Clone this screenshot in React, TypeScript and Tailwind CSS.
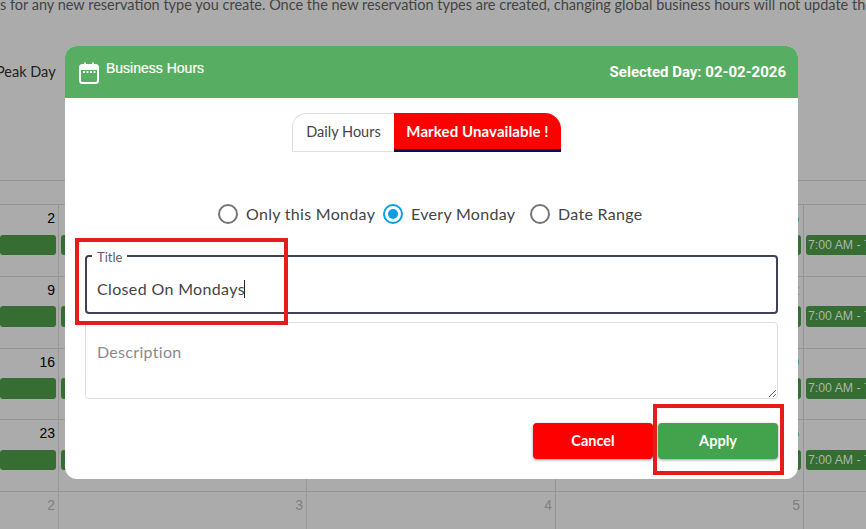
const rows = [
  { h: 'h-[72px]', barClass: 'mt-[7px] h-[20px]', lastClass: 'mt-[30px] h-[20px]', nums: ['2', '3', '4', '5'], ev: true },
  { h: 'h-[72px]', barClass: 'mt-[6px] h-[21px]', lastClass: 'mt-[29px] h-[21px]', nums: ['9', '10', '11', '12'], ev: true },
  { h: 'h-[71px]', barClass: 'mt-[6px] h-[21px]', lastClass: 'mt-[29px] h-[21px]', nums: ['16', '17', '18', '19'], ev: true },
  { h: 'h-[72px]', barClass: 'mt-[7px] h-[20px]', lastClass: 'mt-[30px] h-[20px]', nums: ['23', '24', '25', '26'], ev: true },
  { h: 'h-[38px]', barClass: '', lastClass: '', nums: ['2', '3', '4', '5'], ev: false },
];

type RowProps = { h: string; barClass: string; lastClass: string; nums: string[]; ev: boolean };

function CalendarRow({ h, barClass, lastClass, nums, ev }: RowProps) {
  return (
    <div className={`flex ${h} border-b border-[#959595]`}>
      {nums.map((n, i) => (
        <div
          key={i}
          className={`shrink-0 border-r border-[#959595] pr-[3px] ${i === 0 ? 'w-[59px]' : i === 2 ? 'w-[249px]' : 'w-[248px]'}`}
        >
          <div
            className={`mt-[3px] text-right text-[14px] leading-[20px] ${!ev ? 'text-[#808080]' : i === 3 ? 'mr-px text-[#1a5fa8]' : 'text-black'}`}
          >
            {n}
          </div>
          {ev && (
            <div className={`${barClass} -mr-px rounded-[3px] bg-[#356d33] ${i === 0 ? '' : 'ml-[2px]'}`} />
          )}
        </div>
      ))}
      <div className="min-w-0 flex-1 pl-[2px]">
        {ev && (
          <div className={`${lastClass} overflow-hidden whitespace-nowrap rounded-l-[3px] bg-[#356d33] pl-[2px] text-[12.3px] leading-[20px] text-[#aab8aa]`}>
            7:00 AM - 7:00 PM
          </div>
        )}
      </div>
    </div>
  );
}

function Radio({ label, width, checked }: { label: string; width: string; checked?: boolean }) {
  return (
    <label className={`flex items-center gap-[8px] ${width}`}>
      <span
        className={`flex h-[20px] w-[20px] shrink-0 items-center justify-center rounded-full border-2 ${checked ? 'border-[#0f9be6]' : 'border-[#757575]'}`}
      >
        {checked && <span className="h-[10px] w-[10px] rounded-full bg-[#0f9be6]" />}
      </span>
      <span className="whitespace-nowrap text-[16px] leading-[20px] tracking-[0.3px] text-[#444444]">{label}</span>
    </label>
  );
}

export default function App() {
  return (
    <div className="relative h-[529px] w-[866px] overflow-hidden bg-[#ababab] font-['Lato',sans-serif]">
      {/* page behind the dialog */}
      <p className="h-[60px] whitespace-nowrap text-[14.5px] leading-[10px] text-[#444444]">
        s for any new reservation type you create. Once the new reservation types are created, changing global business hours will not update the
      </p>
      <div className="h-[120px] pt-[2px]">
        <div className="-ml-[4px] text-[14.5px] leading-[20px] text-[#222222]">Peak Day</div>
      </div>
      <div className="border-t border-[#959595] font-['Liberation_Sans',sans-serif]">
        <div className="h-[24px] border-b border-[#959595]" />
        {rows.map((r, i) => (
          <CalendarRow key={i} {...r} />
        ))}
      </div>

      {/* dialog */}
      <div className="absolute left-[65px] top-[46px] flex h-[433px] w-[733px] flex-col overflow-hidden rounded-[12px] bg-white">
        <div className="flex h-[52px] shrink-0 items-center justify-between bg-[#57ad61] pl-[14px] pr-[12px]">
          <div className="flex items-center gap-[7px] text-white">
            <svg width="20" height="22" viewBox="0 0 20 22" fill="none" className="-mb-[2px]">
              <rect x="1" y="3" width="18" height="18" rx="2.5" stroke="white" strokeWidth="2" />
              <rect x="1" y="3" width="18" height="5" fill="white" />
              <rect x="5" y="0.5" width="2" height="4" fill="white" />
              <rect x="13" y="0.5" width="2" height="4" fill="white" />
              <rect x="4" y="9" width="2" height="2" fill="white" />
              <rect x="7.5" y="9" width="2" height="2" fill="white" />
              <rect x="11" y="9" width="2" height="2" fill="white" />
              <rect x="14.5" y="9" width="2" height="2" fill="white" />
            </svg>
            <span className="-mt-[8px] font-['Liberation_Sans',sans-serif] text-[14px] text-white [-webkit-text-stroke:0.2px_white]">Business Hours</span>
          </div>
          <span className="font-['Roboto',sans-serif] text-[15px] font-bold text-white">Selected Day: 02-02-2026</span>
        </div>

        <div className="flex shrink-0 justify-center pr-[10px] pt-[15px]">
          <div className="flex h-[39px] w-[102px] items-center justify-center rounded-tl-[14px] border border-r-0 border-[#e0e0e0] pb-px text-[14.5px] text-[#444444]">
            Daily Hours
          </div>
          <div className="flex h-[39px] w-[167px] items-center justify-center rounded-tr-[16px] border-b-[3px] border-[#0b0b50] bg-[#ff0000] text-[15px] font-bold tracking-[0.1px] text-white">
            Marked Unavailable !
          </div>
        </div>

        <div className="flex shrink-0 pl-[153px] pt-[52px]">
          <Radio label="Only this Monday" width="w-[165px]" />
          <Radio label="Every Monday" width="w-[147px]" checked />
          <Radio label="Date Range" width="w-[120px]" />
        </div>

        <div className="flex flex-1 flex-col px-[20px] pt-[31px]">
          <div className="relative h-[59px] rounded-[4px] border-2 border-[#3e4257]">
            <span className="absolute -top-[7px] left-[5px] bg-white px-[5px] text-[13px] leading-[14px] text-[#5b5f70]">Title</span>
            <div className="flex h-full items-center pl-[10px] pt-[8px] text-[16px] tracking-[0.35px] text-[#444444]">
              Closed On Mondays<span className="ml-[-0.5px] inline-block h-[18px] w-px bg-[#222222]" />
            </div>
          </div>
          <textarea
            placeholder="Description"
            className="mt-[8px] h-[77px] w-full rounded-[4px] border border-[#e0e0e0] px-[11px] pb-[10px] pt-[19px] text-[16px] leading-[20px] tracking-[0.3px] outline-none placeholder:text-[#8a8a8a]"
          />
          <div className="mt-[24px] flex justify-end gap-[5px]">
            <button className="h-[36px] w-[120px] rounded-[4px] bg-[#ff0000] text-[14.5px] font-bold text-white shadow-[0_1px_3px_rgba(0,0,0,0.4)]">
              Cancel
            </button>
            <button className="h-[36px] w-[120px] rounded-[4px] bg-[#43a24c] text-[14.5px] font-bold text-white shadow-[0_1px_3px_rgba(0,0,0,0.4)]">
              Apply
            </button>
          </div>
        </div>
      </div>

      {/* annotation boxes */}
      <div className="absolute left-[75px] top-[238px] h-[87px] w-[213px] border-4 border-[#e51c1c]" />
      <div className="absolute left-[653px] top-[404px] h-[71px] w-[131px] border-4 border-[#e51c1c]" />
    </div>
  );
}
